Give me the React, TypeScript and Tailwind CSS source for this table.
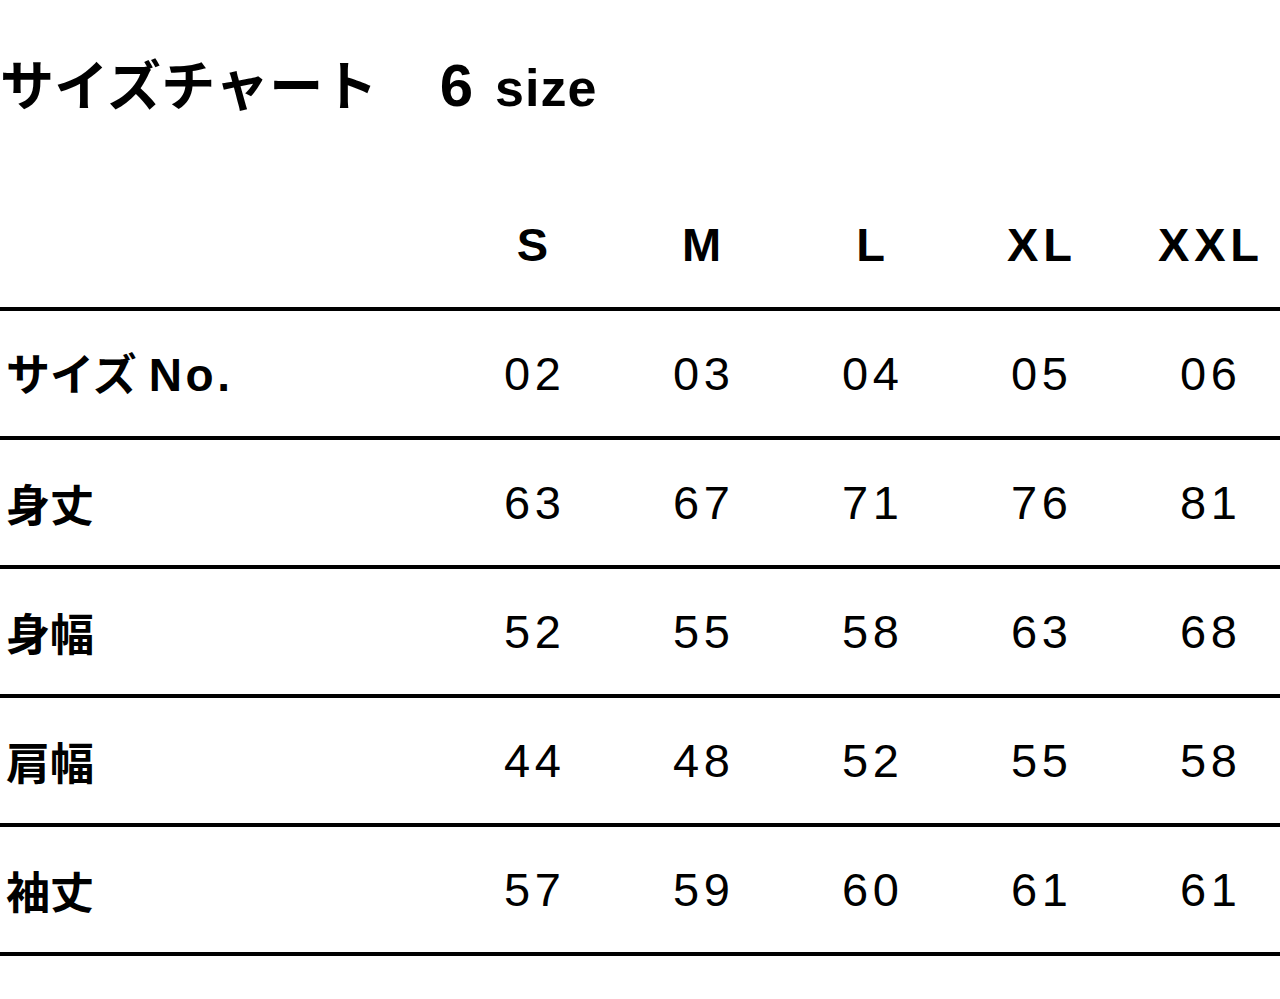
import React from 'react';

const sizes = ['S', 'M', 'L', 'XL', 'XXL'];

const cjk = "text-[44px] font-semibold font-['Noto_Sans_CJK_JP',sans-serif]";

const rows: { label: React.ReactNode; values: string[] }[] = [
  {
    label: (
      <>
        <span className={cjk}>サイズ</span>
        <span className="ml-[12px] tracking-[0.08em]">No.</span>
      </>
    ),
    values: ['02', '03', '04', '05', '06'],
  },
  { label: <span className={cjk}>身丈</span>, values: ['63', '67', '71', '76', '81'] },
  { label: <span className={cjk}>身幅</span>, values: ['52', '55', '58', '63', '68'] },
  { label: <span className={cjk}>肩幅</span>, values: ['44', '48', '52', '55', '58'] },
  { label: <span className={cjk}>袖丈</span>, values: ['57', '59', '60', '61', '61'] },
];

export default function App() {
  return (
    <div className="w-[1280px] h-[999px] overflow-hidden bg-white text-black font-['Liberation_Sans','Noto_Sans_CJK_JP',sans-serif]">
      {/* heading */}
      <h1 className="mt-[56px] h-[54px] flex items-baseline leading-none font-bold">
        <span className="text-[54px] font-semibold tracking-[0.005em] font-['Noto_Sans_CJK_JP',sans-serif]">サイズチャート</span>
        <span className="ml-[62px] text-[60px]">6</span>
        <span className="ml-[22px] text-[52px] tracking-[0.02em]">size</span>
      </h1>

      {/* size table */}
      <div className="mt-[72px] w-[1293px]">
        <div className="grid grid-cols-[448px_repeat(5,169px)] h-[129px] items-center border-b-4 border-black">
          <div />
          {sizes.map((s) => (
            <div key={s} className="text-center text-[47px] font-bold tracking-[0.1em] pl-[0.1em] leading-none">
              {s}
            </div>
          ))}
        </div>
        {rows.map((row, i) => (
          <div
            key={i}
            className="grid grid-cols-[448px_repeat(5,169px)] h-[129px] items-center border-b-4 border-black"
          >
            <div className="pl-[6px] flex items-baseline font-bold text-[46px] leading-none">
              {row.label}
            </div>
            {row.values.map((v, j) => (
              <div key={j} className="text-center text-[47px] tracking-[0.1em] pl-[0.1em] leading-none">
                {v}
              </div>
            ))}
          </div>
        ))}
      </div>
    </div>
  );
}
